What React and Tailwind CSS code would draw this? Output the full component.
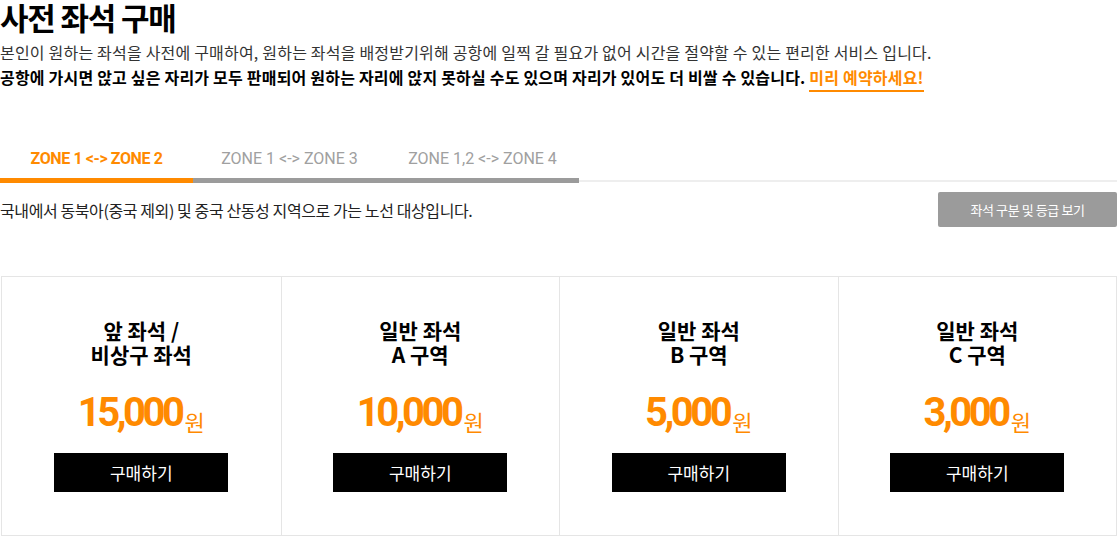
import React from 'react';

const seats = [
    { title: ['앞 좌석 /', '비상구 좌석'], price: '15,000' },
    { title: ['일반 좌석', 'A 구역'], price: '10,000' },
    { title: ['일반 좌석', 'B 구역'], price: '5,000' },
    { title: ['일반 좌석', 'C 구역'], price: '3,000' },
];

const tabs = ['ZONE 1 <-> ZONE 2', 'ZONE 1 <-> ZONE 3', 'ZONE 1,2 <-> ZONE 4'];

const App = () => {
    return (
        <div className="w-[1117px] bg-white text-[#111] font-['Noto_Sans_CJK_KR','Noto_Sans',sans-serif]">
            {/* Header */}
            <h1 className="pt-[1px] text-[31px] font-bold leading-[31px] tracking-[-1.2px] text-black">사전 좌석 구매</h1>
            <div className="mt-[8px] text-[16px] leading-[25px] tracking-[0.2px]">
                <p className="text-[#333]">본인이 원하는 좌석을 사전에 구매하여, 원하는 좌석을 배정받기위해 공항에 일찍 갈 필요가 없어 시간을 절약할 수 있는 편리한 서비스 입니다.</p>
                <p className="font-bold text-black">
                    공항에 가시면 앉고 싶은 자리가 모두 판매되어 원하는 자리에 앉지 못하실 수도 있으며 자리가 있어도 더 비쌀 수 있습니다.{' '}
                    <span className="text-[#ff8a00] border-b-2 border-[#ff8a00] pb-[1px]">미리 예약하세요!</span>
                </p>
            </div>

            {/* Tabs */}
            <div className="mt-[50px] flex items-end">
                {tabs.map((tab, i) => (
                    <div
                        key={tab}
                        className={`w-[193px] h-[43px] flex items-center justify-center border-b-[5px] text-[16px] font-['Roboto',sans-serif] ${i === 0 ? 'border-[#ff8a00] text-[#ff8a00] font-bold tracking-[-0.4px]' : 'border-[#9b9b9b] text-[#a0a0a0]'}`}
                    >
                        {tab}
                    </div>
                ))}
                <div className="flex-1 h-[2px] mb-[1px] bg-[#eeeeee]" />
            </div>

            <div className="mt-[9px] flex items-center justify-between">
                <p className="text-[16px] tracking-[-0.4px] text-[#222]">국내에서 동북아(중국 제외) 및 중국 산동성 지역으로 가는 노선 대상입니다.</p>
                <button className="w-[179px] h-[35px] bg-[#9b9b9b] text-white text-[13px] tracking-[-0.4px] rounded-[2px]">좌석 구분 및 등급 보기</button>
            </div>

            {/* Seat cards */}
            <div className="mt-[49px] ml-px w-[1116px] grid grid-cols-4 border border-[#e5e5e5]">
                {seats.map((seat, i) => (
                    <div key={i} className={`h-[258px] pt-[41px] flex flex-col items-center ${i > 0 ? 'border-l border-[#e5e5e5]' : ''}`}>
                        <p className="text-[21px] leading-[24px] font-bold text-black text-center">
                            {seat.title[0]}<br />{seat.title[1]}
                        </p>
                        <div className="mt-[22px] h-[50px] flex items-end text-[#ff8a00]">
                            <span className="text-[40px] leading-[50px] font-bold tracking-[-3.5px] font-['Roboto',sans-serif]">{seat.price}</span>
                            <span className="text-[22px] leading-[34px] ml-[3px]">원</span>
                        </div>
                        <button className="mt-[15px] w-[174px] h-[39px] bg-black text-white text-[17px]">구매하기</button>
                    </div>
                ))}
            </div>
        </div>
    );
};

export default App;
